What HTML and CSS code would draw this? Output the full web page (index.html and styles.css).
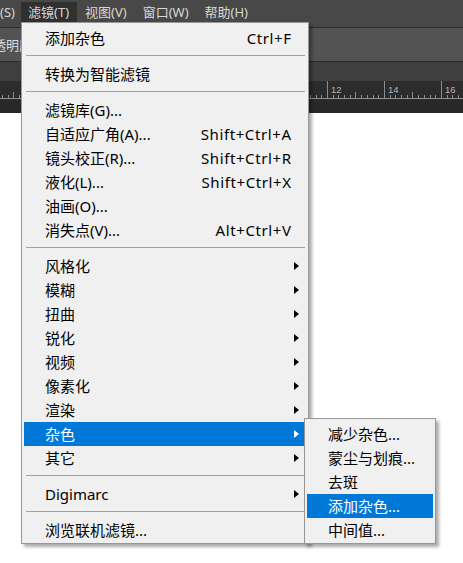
FILE: index.html
```html
<!DOCTYPE html>
<html lang="zh-CN">
<head>
<meta charset="utf-8">
<title>滤镜菜单</title>
<link rel="stylesheet" href="styles.css">
</head>
<body>
<div class="app">
  <div class="menubar">
    <span class="mb-item first">(S)</span>
    <span class="mb-item active">滤镜(T)</span>
    <span class="mb-item">视图(V)</span>
    <span class="mb-item">窗口(W)</span>
    <span class="mb-item">帮助(H)</span>
  </div>
  <div class="options"><span class="opt-label">透明度:</span></div>
  <div class="tabs"></div>
  <div class="ruler">
    <svg class="ruler-svg" width="463" height="19" viewBox="0 0 463 19">
      <defs>
        <pattern id="ticks" x="42" y="0" width="57" height="19" patternUnits="userSpaceOnUse">
          <rect x="0" y="0" width="1" height="18" fill="#8c8c8c"/>
          <rect x="6" y="14" width="1" height="3" fill="#8c8c8c"/>
          <rect x="11" y="14" width="1" height="3" fill="#8c8c8c"/>
          <rect x="17" y="14" width="1" height="3" fill="#8c8c8c"/>
          <rect x="23" y="14" width="1" height="3" fill="#8c8c8c"/>
          <rect x="28" y="11" width="1" height="6" fill="#8c8c8c"/>
          <rect x="34" y="14" width="1" height="3" fill="#8c8c8c"/>
          <rect x="40" y="14" width="1" height="3" fill="#8c8c8c"/>
          <rect x="46" y="14" width="1" height="3" fill="#8c8c8c"/>
          <rect x="51" y="14" width="1" height="3" fill="#8c8c8c"/>
        </pattern>
      </defs>
      <rect x="0" y="0" width="463" height="19" fill="url(#ticks)"/>
      <rect x="0" y="17" width="463" height="1" fill="#8c8c8c"/>
      <text x="331" y="12" class="ruler-num">12</text>
      <text x="388" y="12" class="ruler-num">14</text>
      <text x="445" y="12" class="ruler-num">16</text>
    </svg>
  </div>
  <div class="pasteboard"></div>
  <div class="canvas"></div>
</div>

<div class="menu main-menu">
  <div class="item"><span>添加杂色</span><span class="key">Ctrl+F</span></div>
  <div class="sep"></div>
  <div class="item"><span>转换为智能滤镜</span></div>
  <div class="sep"></div>
  <div class="item"><span>滤镜库(G)...</span></div>
  <div class="item"><span>自适应广角(A)...</span><span class="key">Shift+Ctrl+A</span></div>
  <div class="item"><span>镜头校正(R)...</span><span class="key">Shift+Ctrl+R</span></div>
  <div class="item"><span>液化(L)...</span><span class="key">Shift+Ctrl+X</span></div>
  <div class="item"><span>油画(O)...</span></div>
  <div class="item"><span>消失点(V)...</span><span class="key">Alt+Ctrl+V</span></div>
  <div class="sep"></div>
  <div class="item"><span>风格化</span><span class="arrow"></span></div>
  <div class="item"><span>模糊</span><span class="arrow"></span></div>
  <div class="item"><span>扭曲</span><span class="arrow"></span></div>
  <div class="item"><span>锐化</span><span class="arrow"></span></div>
  <div class="item"><span>视频</span><span class="arrow"></span></div>
  <div class="item"><span>像素化</span><span class="arrow"></span></div>
  <div class="item"><span>渲染</span><span class="arrow"></span></div>
  <div class="item hl"><span>杂色</span><span class="arrow"></span></div>
  <div class="item"><span>其它</span><span class="arrow"></span></div>
  <div class="sep"></div>
  <div class="item"><span>Digimarc</span><span class="arrow"></span></div>
  <div class="sep"></div>
  <div class="item"><span>浏览联机滤镜...</span></div>
</div>

<div class="menu sub-menu">
  <div class="item"><span>减少杂色...</span></div>
  <div class="item"><span>蒙尘与划痕...</span></div>
  <div class="item"><span>去斑</span></div>
  <div class="item hl"><span>添加杂色...</span></div>
  <div class="item"><span>中间值...</span></div>
</div>
</body>
</html>
```

FILE: styles.css
```css
html, body {
  margin: 0;
  padding: 0;
}

body {
  width: 463px;
  height: 563px;
  overflow: hidden;
  position: relative;
  font-family: "Noto Sans", "Noto Sans CJK SC", sans-serif;
  background: #ffffff;
}

.app {
  display: flex;
  flex-direction: column;
  height: 563px;
}

.menubar {
  height: 28px;
  box-sizing: border-box;
  background: #484848;
  border-bottom: 1px solid #2c2c2c;
  display: flex;
  align-items: flex-start;
  padding-top: 2px;
  font-size: 13px;
  color: #d6d6d6;
}

.mb-item {
  height: 20px;
  line-height: 20px;
  padding: 0 8px 0 7px;
  margin-right: 1px;
  white-space: nowrap;
}

.mb-item.first {
  width: 21px;
  padding: 0;
  margin-right: 0;
  box-sizing: border-box;
}

.mb-item.active {
  background: #303030;
}

.options {
  height: 34px;
  background: #535353;
  border-bottom: 1px solid #2b2b2b;
  box-sizing: border-box;
  display: flex;
  align-items: center;
  font-size: 13px;
  color: #dcdcdc;
}

.opt-label {
  margin-left: -7px;
  white-space: nowrap;
}

.tabs {
  height: 19px;
  background: #3f3f3f;
}

.ruler {
  height: 19px;
  background: #2c2c2c;
}

.ruler-svg {
  display: block;
}

.ruler-num {
  font-family: "Liberation Sans", sans-serif;
  font-size: 9.5px;
  fill: #b4b4b4;
}

.pasteboard {
  height: 13px;
  background: #282828;
}

.canvas {
  flex: 1;
  background: #ffffff;
}

.menu {
  position: absolute;
  background: #f0f0f0;
  border: 1px solid #979797;
  box-shadow: 3px 3px 3px rgba(0, 0, 0, 0.32);
  padding: 3px 2px 1px 2px;
  font-size: 15px;
  color: #000;
}

.main-menu {
  left: 21px;
  top: 22px;
  width: 282px;
}

.sub-menu {
  left: 304px;
  top: 418px;
  width: 126px;
  z-index: 2;
}

.item {
  height: 24px;
  line-height: 24px;
  display: flex;
  align-items: center;
  padding: 0 15px 0 21px;
  white-space: nowrap;
}

.item.hl {
  background: #0078d7;
  color: #ffffff;
}

.key {
  margin-left: auto;
  letter-spacing: 0.6px;
  margin-right: -0.6px;
}

.arrow {
  margin-left: auto;
  margin-right: -8px;
  width: 0;
  height: 0;
  border-left: 5px solid #000;
  border-top: 4px solid transparent;
  border-bottom: 4px solid transparent;
}

.item.hl .arrow {
  border-left-color: #ffffff;
}

.sep {
  height: 1px;
  margin: 5px 1px 6px 2px;
  background: #a0a0a0;
}
```
